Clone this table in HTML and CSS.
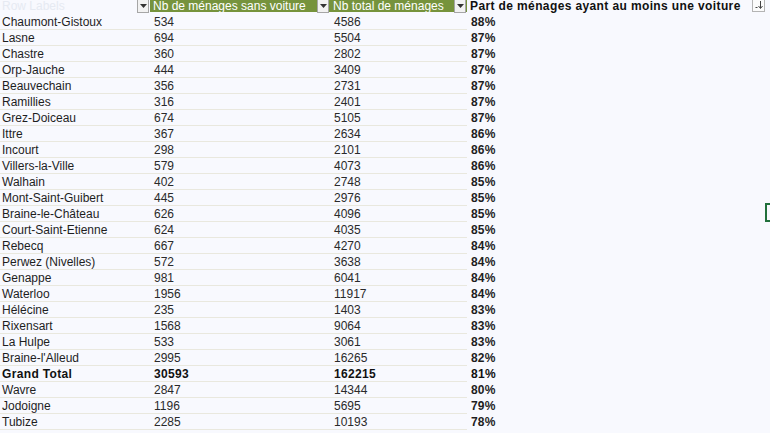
FILE: index.html
```html
<!DOCTYPE html>
<html>
<head>
<meta charset="utf-8">
<link rel="stylesheet" href="styles.css">
</head>
<body>
<div class="sheet">
  <div class="table">
    <div class="hrow">
      <div class="hcell plain"><span class="faint">Row Labels</span><span class="dd"><svg width="7" height="4" viewBox="0 0 7 4"><path d="M0 0h7L3.5 4z" fill="#333"/></svg></span></div>
      <div class="hcell green"><span class="gtxt">Nb de ménages sans voiture</span><span class="dd"><svg width="7" height="4" viewBox="0 0 7 4"><path d="M0 0h7L3.5 4z" fill="#333"/></svg></span></div>
      <div class="hcell green"><span class="gtxt">Nb total de ménages</span><span class="dd"><svg width="7" height="4" viewBox="0 0 7 4"><path d="M0 0h7L3.5 4z" fill="#333"/></svg></span></div>
      <div class="hcell last"><span class="btxt">Part de ménages ayant au moins une voiture</span><span class="sortbtn"><svg width="10" height="9" viewBox="0 0 10 9"><path d="M6.5 0v7M4.5 5l2 2.5 2-2.5M1.5 6.5h2" stroke="#444" stroke-width="1" fill="none"/></svg></span></div>
    </div>
    <div class="row"><div class="c">Chaumont-Gistoux</div><div class="c n">534</div><div class="c n2">4586</div><div class="c p">88%</div></div>
    <div class="row"><div class="c">Lasne</div><div class="c n">694</div><div class="c n2">5504</div><div class="c p">87%</div></div>
    <div class="row"><div class="c">Chastre</div><div class="c n">360</div><div class="c n2">2802</div><div class="c p">87%</div></div>
    <div class="row"><div class="c">Orp-Jauche</div><div class="c n">444</div><div class="c n2">3409</div><div class="c p">87%</div></div>
    <div class="row"><div class="c">Beauvechain</div><div class="c n">356</div><div class="c n2">2731</div><div class="c p">87%</div></div>
    <div class="row"><div class="c">Ramillies</div><div class="c n">316</div><div class="c n2">2401</div><div class="c p">87%</div></div>
    <div class="row"><div class="c">Grez-Doiceau</div><div class="c n">674</div><div class="c n2">5105</div><div class="c p">87%</div></div>
    <div class="row"><div class="c">Ittre</div><div class="c n">367</div><div class="c n2">2634</div><div class="c p">86%</div></div>
    <div class="row"><div class="c">Incourt</div><div class="c n">298</div><div class="c n2">2101</div><div class="c p">86%</div></div>
    <div class="row"><div class="c">Villers-la-Ville</div><div class="c n">579</div><div class="c n2">4073</div><div class="c p">86%</div></div>
    <div class="row"><div class="c">Walhain</div><div class="c n">402</div><div class="c n2">2748</div><div class="c p">85%</div></div>
    <div class="row"><div class="c">Mont-Saint-Guibert</div><div class="c n">445</div><div class="c n2">2976</div><div class="c p">85%</div></div>
    <div class="row"><div class="c">Braine-le-Château</div><div class="c n">626</div><div class="c n2">4096</div><div class="c p">85%</div></div>
    <div class="row"><div class="c">Court-Saint-Etienne</div><div class="c n">624</div><div class="c n2">4035</div><div class="c p">85%</div></div>
    <div class="row"><div class="c">Rebecq</div><div class="c n">667</div><div class="c n2">4270</div><div class="c p">84%</div></div>
    <div class="row"><div class="c">Perwez (Nivelles)</div><div class="c n">572</div><div class="c n2">3638</div><div class="c p">84%</div></div>
    <div class="row"><div class="c">Genappe</div><div class="c n">981</div><div class="c n2">6041</div><div class="c p">84%</div></div>
    <div class="row"><div class="c">Waterloo</div><div class="c n">1956</div><div class="c n2">11917</div><div class="c p">84%</div></div>
    <div class="row"><div class="c">Hélécine</div><div class="c n">235</div><div class="c n2">1403</div><div class="c p">83%</div></div>
    <div class="row"><div class="c">Rixensart</div><div class="c n">1568</div><div class="c n2">9064</div><div class="c p">83%</div></div>
    <div class="row"><div class="c">La Hulpe</div><div class="c n">533</div><div class="c n2">3061</div><div class="c p">83%</div></div>
    <div class="row"><div class="c">Braine-l'Alleud</div><div class="c n">2995</div><div class="c n2">16265</div><div class="c p">82%</div></div>
    <div class="row total"><div class="c">Grand Total</div><div class="c n">30593</div><div class="c n2">162215</div><div class="c p">81%</div></div>
    <div class="row"><div class="c">Wavre</div><div class="c n">2847</div><div class="c n2">14344</div><div class="c p">80%</div></div>
    <div class="row"><div class="c">Jodoigne</div><div class="c n">1196</div><div class="c n2">5695</div><div class="c p">79%</div></div>
    <div class="row"><div class="c">Tubize</div><div class="c n">2285</div><div class="c n2">10193</div><div class="c p">78%</div></div>
  </div>
  <div class="selcell"></div>
</div>
</body>
</html>
```
FILE: styles.css
```css
html, body {
  margin: 0;
  padding: 0;
  width: 770px;
  height: 433px;
  overflow: hidden;
  background: #f8f9fe;
}
.sheet {
  position: relative;
  width: 770px;
  height: 433px;
  font-family: "Liberation Sans", Arial, sans-serif;
  font-size: 12px;
  color: #1e1e1e;
}
.table {
  display: flex;
  flex-direction: column;
  margin-top: -2px;
}
.hrow {
  display: grid;
  grid-template-columns: 150px 180px 137px 1fr;
  height: 16px;
}
.hcell {
  display: flex;
  align-items: flex-start;
  height: 14px;
  line-height: 16px;
}
.hcell.green {
  background: #76933c;
}
.faint {
  flex: 1;
  padding-left: 2px;
  color: #e6eaf2;
}
.gtxt {
  flex: 1;
  padding-left: 3px;
  color: #ffffff;
  white-space: nowrap;
  overflow: hidden;
  height: 14px;
}
.btxt {
  flex: 1;
  padding-left: 3px;
  font-weight: bold;
  letter-spacing: 0.38px;
  color: #111;
  white-space: nowrap;
}
.dd {
  width: 10px;
  height: 12px;
  margin-top: 1px;
  margin-right: 1px;
  background: #f2f2f2;
  border: 1px solid #a6a6a6;
  display: flex;
  align-items: center;
  justify-content: center;
  box-sizing: content-box;
}
.sortbtn {
  width: 11px;
  height: 11px;
  margin-top: 1px;
  margin-right: 5px;
  background: #fbfbfb;
  border: 1px solid #b4b4b4;
  display: flex;
  align-items: center;
  justify-content: center;
}
.row {
  display: grid;
  grid-template-columns: 150px 180px 137px 1fr;
  height: 16px;
}
.c {
  height: 15px;
  line-height: 16px;
  border-bottom: 1px solid #e9e8de;
  white-space: nowrap;
  padding-left: 2px;
}
.c.n, .c.n2 {
  padding-left: 4px;
  color: #2a2a2a;
}
.c.p {
  padding-left: 4px;
  font-weight: bold;
  letter-spacing: 0.2px;
  border-bottom: none;
}
.row.total .c {
  font-weight: bold;
  letter-spacing: 0.35px;
  color: #111;
}
.selcell {
  position: absolute;
  left: 765px;
  top: 205px;
  width: 14px;
  height: 15px;
  border: 2px solid #21703c;
}
```
